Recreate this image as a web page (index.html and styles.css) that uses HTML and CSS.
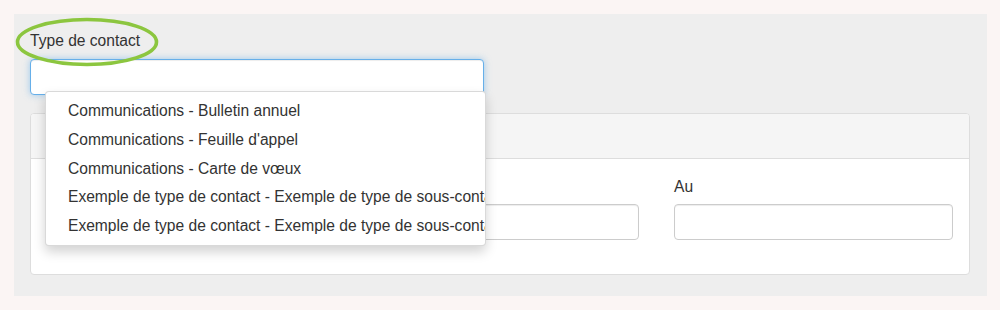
FILE: index.html
```html
<!DOCTYPE html>
<html lang="fr">
<head>
<meta charset="utf-8">
<title>Type de contact</title>
<link rel="stylesheet" href="styles.css">
</head>
<body>
<div class="panel">
  <div class="field">
    <label class="label">Type de contact</label>
    <svg class="highlight" width="146" height="52" viewBox="0 0 146 52" aria-hidden="true">
      <ellipse cx="73" cy="26" rx="69.5" ry="22.5" fill="none" stroke="#8cc63f" stroke-width="3.6"/>
    </svg>
    <div class="input focused"></div>
    <ul class="dropdown">
      <li>Communications - Bulletin annuel</li>
      <li>Communications - Feuille d'appel</li>
      <li>Communications - Carte de vœux</li>
      <li>Exemple de type de contact - Exemple de type de sous-contact 1</li>
      <li>Exemple de type de contact - Exemple de type de sous-contact 2</li>
    </ul>
  </div>
  <div class="card">
    <div class="card-header"></div>
    <div class="card-body">
      <div class="col">
        <div class="label spacer"></div>
        <div class="input"></div>
      </div>
      <div class="col">
        <div class="label spacer"></div>
        <div class="input"></div>
      </div>
      <div class="col">
        <label class="label">Au</label>
        <div class="input"></div>
      </div>
    </div>
  </div>
</div>
</body>
</html>
```

FILE: styles.css
```css
* { box-sizing: border-box; }
html, body { margin: 0; }
body {
  background: #fbf5f4;
  padding: 14px;
  font-family: "Liberation Sans", Arial, sans-serif;
  font-size: 15.6px;
  line-height: 20px;
  color: #333;
}
.panel {
  width: 973px;
  height: 282px;
  background: #eeeeee;
  padding: 17px 17px 0 16px;
}
.field {
  position: relative;
  width: 454px;
  display: flex;
  flex-direction: column;
}
.label {
  display: block;
  margin-bottom: 8px;
}
.spacer { height: 20px; }
.highlight {
  position: absolute;
  left: -16px;
  top: -15px;
}
.input {
  height: 36px;
  background: #fff;
  border: 1px solid #ccc;
  border-radius: 4px;
  box-shadow: inset 0 1px 1px rgba(0,0,0,.075);
}
.input.focused {
  border-color: #66afe9;
  box-shadow: inset 0 1px 1px rgba(0,0,0,.075), 0 0 7px rgba(102,175,233,.6);
}
.dropdown {
  position: absolute;
  z-index: 5;
  left: 15px;
  top: 60px;
  width: 441px;
  margin: 0;
  padding: 5px 0;
  list-style: none;
  background: #fff;
  border: 1px solid rgba(0,0,0,.15);
  border-radius: 4px;
  box-shadow: 0 6px 12px rgba(0,0,0,.175);
  overflow: hidden;
  white-space: nowrap;
}
.dropdown li {
  padding: 4.33px 22px;
  line-height: 20px;
}
.card {
  margin-top: 18px;
  height: 162px;
  background: #fff;
  border: 1px solid #ddd;
  border-radius: 4px;
  overflow: hidden;
}
.card-header {
  height: 45px;
  background: #f5f5f5;
  border-bottom: 1px solid #ddd;
}
.card-body {
  display: grid;
  grid-template-columns: repeat(3, 1fr);
  column-gap: 35px;
  padding: 18px 16px 0 15px;
}
.card-body .label { margin-bottom: 7px; }
```
